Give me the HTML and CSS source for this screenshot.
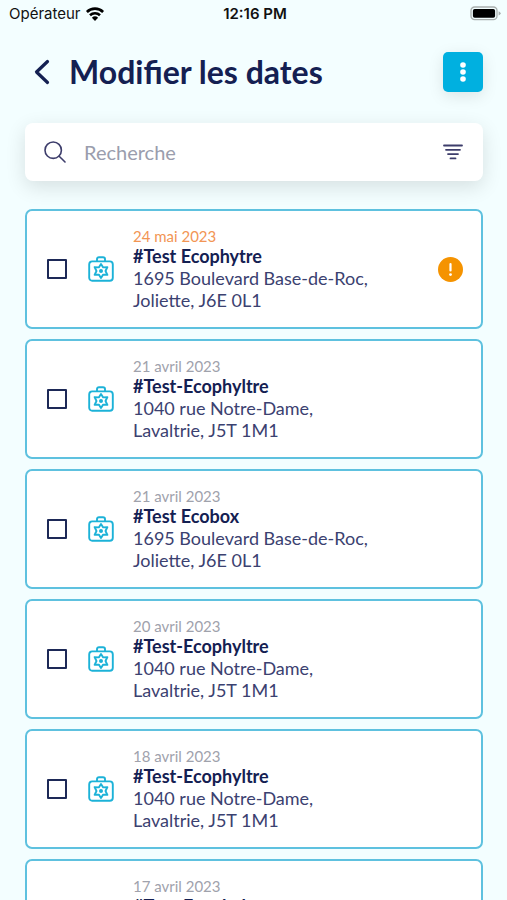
FILE: index.html
```
<!DOCTYPE html>
<html lang="fr">
<head>
    <meta charset="UTF-8">
    <meta name="viewport" content="width=device-width, initial-scale=1.0">
    <title>Modifier les dates</title>
    <link rel="stylesheet" href="styles.css">
</head>
<body>
    <svg class="symbols" aria-hidden="true">
        <symbol id="icon-case" viewBox="0 0 26 26">
            <g fill="none" stroke="currentColor" stroke-width="1.9" stroke-linejoin="round">
                <rect x="1.2" y="5.4" width="23.6" height="19.4" rx="3"/>
                <path d="M9 5.4V3Q9 1.2 11 1.2H15Q17 1.2 17 3V5.4"/>
                <path d="M13 8L15.2 11.4L19.4 11.2L17.5 15L19.4 18.8L15.2 18.6L13 22L10.8 18.6L6.6 18.8L8.5 15L6.6 11.2L10.8 11.4Z"/>
            </g>
            <circle cx="13" cy="15" r="2" fill="currentColor"/>
        </symbol>
    </svg>

    <div class="screen">
        <div class="status-bar">
            <div class="carrier">
                <span>Opérateur</span>
                <svg width="20" height="16" viewBox="0 0 20 16" fill="none" stroke="#000" stroke-width="2.6">
                    <path d="M1.9 6A11.5 11.5 0 0 1 18.1 6"/>
                    <path d="M5 9.3A7.2 7.2 0 0 1 15 9.3"/>
                    <path d="M10 15L6.9 11.8A4.5 4.5 0 0 1 13.1 11.8Z" fill="#000" stroke="none"/>
                </svg>
            </div>
            <span class="time">12:16 PM</span>
            <div class="battery">
                <svg width="31" height="15" viewBox="0 0 31 15">
                    <rect x="1" y="1" width="26" height="12.6" rx="3.6" fill="none" stroke="#a9afae" stroke-width="1.3"/>
                    <rect x="2.9" y="2.9" width="22.2" height="8.8" rx="1.8"/>
                    <path d="M28.6 5.2Q30.6 6 30.6 7.3T28.6 9.4Z" fill="#a9afae"/>
                </svg>
            </div>
        </div>

        <header class="header">
            <button class="back-button" aria-label="Retour">
                <svg width="16" height="26" viewBox="0 0 16 26" fill="none" stroke="currentColor" stroke-width="3.2" stroke-linecap="round" stroke-linejoin="round">
                    <path d="M13.5 2.5L2.5 13L13.5 23.5"/>
                </svg>
            </button>
            <h1>Modifier les dates</h1>
            <button class="menu-button" aria-label="Menu">
                <svg width="6" height="22" viewBox="0 0 6 22" fill="#fff">
                    <circle cx="3" cy="4" r="2.8"/>
                    <circle cx="3" cy="11" r="2.8"/>
                    <circle cx="3" cy="18" r="2.8"/>
                </svg>
            </button>
        </header>

        <div class="search-box">
            <svg width="22" height="22" viewBox="0 0 22 22" fill="none" stroke="currentColor" stroke-width="1.6" stroke-linecap="round">
                <circle cx="9.2" cy="9.2" r="8.2"/>
                <path d="M15.2 15.2L21 21"/>
            </svg>
            <input type="text" placeholder="Recherche" aria-label="Recherche">
            <button class="filter-button" aria-label="Filtrer">
                <svg width="20" height="16" viewBox="0 0 20 16" fill="none" stroke="currentColor" stroke-width="1.8" stroke-linecap="round">
                    <path d="M1 1.5H19M3 5.8H17M5 10.1H15M7.500 14.4H12.500"/>
                </svg>
            </button>
        </div>

        <main class="list">
            <label class="card">
                <input type="checkbox">
                <svg class="case"><use href="#icon-case"/></svg>
                <span class="info">
                    <span class="date late">24 mai 2023</span>
                    <strong>#Test Ecophytre</strong>
                    <span>1695 Boulevard Base-de-Roc,</span>
                    <span>Joliette, J6E 0L1</span>
                </span>
                <svg class="alert" viewBox="0 0 25 25">
                    <circle cx="12.5" cy="12.5" r="12.5" fill="#f59300"/>
                    <path d="M12.5 7V13.5" stroke="#fff" stroke-width="2.2" stroke-linecap="round"/>
                    <circle cx="12.5" cy="17.6" r="1.4" fill="#fff"/>
                </svg>
            </label>
            <label class="card">
                <input type="checkbox">
                <svg class="case"><use href="#icon-case"/></svg>
                <span class="info">
                    <span class="date">21 avril 2023</span>
                    <strong>#Test-Ecophyltre</strong>
                    <span>1040 rue Notre-Dame,</span>
                    <span>Lavaltrie, J5T 1M1</span>
                </span>
            </label>
            <label class="card">
                <input type="checkbox">
                <svg class="case"><use href="#icon-case"/></svg>
                <span class="info">
                    <span class="date">21 avril 2023</span>
                    <strong>#Test Ecobox</strong>
                    <span>1695 Boulevard Base-de-Roc,</span>
                    <span>Joliette, J6E 0L1</span>
                </span>
            </label>
            <label class="card">
                <input type="checkbox">
                <svg class="case"><use href="#icon-case"/></svg>
                <span class="info">
                    <span class="date">20 avril 2023</span>
                    <strong>#Test-Ecophyltre</strong>
                    <span>1040 rue Notre-Dame,</span>
                    <span>Lavaltrie, J5T 1M1</span>
                </span>
            </label>
            <label class="card">
                <input type="checkbox">
                <svg class="case"><use href="#icon-case"/></svg>
                <span class="info">
                    <span class="date">18 avril 2023</span>
                    <strong>#Test-Ecophyltre</strong>
                    <span>1040 rue Notre-Dame,</span>
                    <span>Lavaltrie, J5T 1M1</span>
                </span>
            </label>
            <label class="card">
                <input type="checkbox">
                <svg class="case"><use href="#icon-case"/></svg>
                <span class="info">
                    <span class="date">17 avril 2023</span>
                    <strong>#Test-Ecophyltre</strong>
                    <span>1040 rue Notre-Dame,</span>
                    <span>Lavaltrie, J5T 1M1</span>
                </span>
            </label>
        </main>
    </div>
</body>
</html>
```
FILE: styles.css
```
* {
    box-sizing: border-box;
}

body {
    margin: 0;
    background: #f3feff;
    color: #142052;
    font-family: Lato, "Open Sans", sans-serif;
}

button {
    padding: 0;
    border: none;
    background: none;
    color: inherit;
    cursor: pointer;
}

svg {
    display: block;
    flex-shrink: 0;
}

.symbols {
    display: none;
}

.screen {
    display: flex;
    flex-direction: column;
    height: 100vh;
}

/* Status bar */
.status-bar {
    display: grid;
    grid-template-columns: 1fr auto 1fr;
    align-items: center;
    height: 27px;
    padding: 0 6px 0 9px;
    flex-shrink: 0;
    color: #111;
    font-family: Inter, sans-serif;
    font-size: 15px;
}

.carrier {
    display: flex;
    align-items: center;
    gap: 4px;
}

.time {
    font-weight: 600;
}

.battery {
    justify-self: end;
}

/* Header */
.header {
    display: flex;
    align-items: center;
    height: 89px;
    padding: 0 24px 0 34px;
    flex-shrink: 0;
}

.header h1 {
    flex: 1;
    margin: 0 0 0 19px;
    font-size: 32px;
    font-weight: bold;
}

.menu-button {
    display: flex;
    align-items: center;
    justify-content: center;
    width: 40px;
    height: 40px;
    border-radius: 5px;
    background: #00b0e0;
    box-shadow: 0 4px 16px rgba(0, 0, 0, 0.1);
}

/* Search */
.search-box {
    display: flex;
    align-items: center;
    height: 58px;
    margin: 7px 24px 0 25px;
    padding: 0 20px 0 19px;
    flex-shrink: 0;
    border-radius: 8px;
    background: white;
    box-shadow: 0 6px 20px rgba(0, 0, 0, 0.12);
    color: #3d3d6b;
}

.search-box input {
    flex: 1;
    min-width: 0;
    margin-left: 18px;
    padding: 0;
    border: none;
    outline: none;
    background: none;
    color: #142052;
    font-family: inherit;
    font-size: 20px;
}

.search-box input::placeholder {
    color: #9a9dad;
}

/* Cards */
.list {
    display: flex;
    flex-direction: column;
    gap: 10px;
    margin-top: 28px;
    padding: 0 24px 10px 25px;
    overflow-y: auto;
    scrollbar-width: none;
}

.card {
    display: flex;
    align-items: center;
    padding: 16px 18px 16px 20px;
    flex-shrink: 0;
    min-height: 120px;
    border: 2px solid #5ec1df;
    border-radius: 7px;
    background: white;
}

.card input {
    appearance: none;
    width: 20px;
    height: 20px;
    margin: 0 21px 0 0;
    border: 2px solid #1d2957;
    border-radius: 1px;
}

.card input:checked {
    background: #00b0e0;
}

.case {
    width: 26px;
    height: 26px;
    color: #1cb2d8;
}

.info {
    display: flex;
    flex: 1;
    flex-direction: column;
    margin-left: 19px;
    color: #3b4170;
    font-size: 18px;
    line-height: 22px;
}

.info strong {
    color: #142052;
}

.date {
    color: #a0a2ac;
    font-size: 15px;
    line-height: 18px;
}

.date.late {
    color: #f29554;
}

.alert {
    width: 25px;
    height: 25px;
}
```
